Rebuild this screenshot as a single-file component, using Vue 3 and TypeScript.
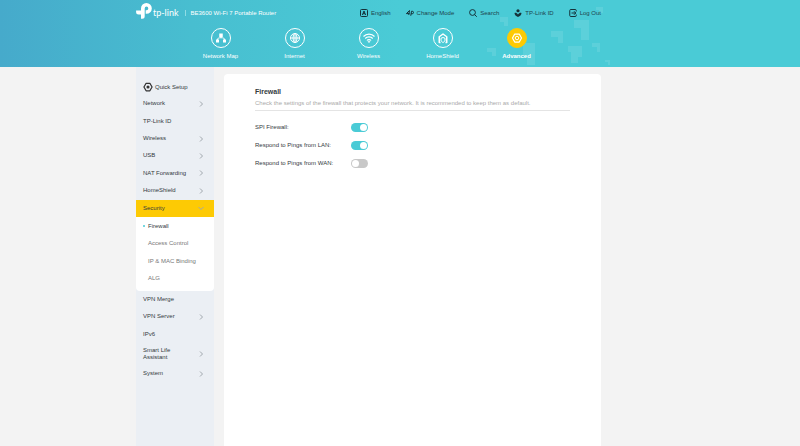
<script setup lang="ts">
import { reactive } from 'vue'

interface MenuItem {
  label: string
  arrow?: boolean
  active?: boolean
}

const tabs = ['Network Map', 'Internet', 'Wireless', 'HomeShield', 'Advanced']
const tools = ['English', 'Change Mode', 'Search', 'TP-Link ID', 'Log Out']

const upper: MenuItem[] = [
  { label: 'Network', arrow: true },
  { label: 'TP-Link ID' },
  { label: 'Wireless', arrow: true },
  { label: 'USB', arrow: true },
  { label: 'NAT Forwarding', arrow: true },
  { label: 'HomeShield', arrow: true },
  { label: 'Security', arrow: true, active: true },
]
const security = ['Firewall', 'Access Control', 'IP & MAC Binding', 'ALG']
const lower: MenuItem[] = [
  { label: 'VPN Merge' },
  { label: 'VPN Server', arrow: true },
  { label: 'IPv6' },
  { label: 'Smart Life Assistant', arrow: true },
  { label: 'System', arrow: true },
]

const settings = reactive([
  { id: 'spi', label: 'SPI Firewall:', on: true },
  { id: 'lan', label: 'Respond to Pings from LAN:', on: true },
  { id: 'wan', label: 'Respond to Pings from WAN:', on: false },
])
</script>

<template>
  <div class="page">
    <header class="header">
      <div class="wrap">
        <svg class="pattern" viewBox="0 0 110 67" aria-hidden="true">
          <path fill="#fff" fill-opacity=".1" d="M9 17h8v9h-4v-4H9zM-4 48h9v8H1v-4h-5zM32 43h12v22h-8v-8h-4zM60 31h12v12h-5v-6h-7zM83 20h15v20h-8V28h-7zM77 46h14v11h-4v6h-7V52h-3zM101 43h8v9h-3v-5h-5zM105 7h7v6h-4v-3h-3zM114 60h5v5h-2v-3h-3z" />
        </svg>
        <div class="top">
          <a class="brand" href="#" aria-label="tp-link">
            <svg class="mark" viewBox="0 0 16 16" aria-hidden="true" fill="#fff">
              <path d="M5 7.500V5.400a5.400 5.400 0 1 1 5.500 5.400H9.700V7.200h.8a1.800 1.800 0 1 0-1.800-1.800v7.900a2.500 2.500 0 0 1-2.500 2.500H5v-4.400H2.600A2.500 2.500 0 0 1 .1 8.900V7.500z" />
            </svg>
            <span class="word">tp-link</span>
          </a>
          <span class="model">BE3600 Wi-Fi 7 Portable Router</span>
          <nav class="tools">
            <a v-for="(t, i) in tools" :key="t" href="#" class="tool">
              <svg viewBox="0 0 16 16" aria-hidden="true" fill="none" stroke="currentColor" stroke-width="2">
                <template v-if="i === 0"><rect x="1" y="1" width="14" height="14" rx="2" /><path d="M4.800 12 8 4l3.200 8M6 9.400h4" /></template>
                <template v-else-if="i === 1"><path d="M5.500 12 7 3 .8 9.200H7M9.500 13.500 11 4.500h1.500a2.400 2.400 0 0 1 0 5H10" /></template>
                <template v-else-if="i === 2"><circle cx="7" cy="7" r="5.800" /><path d="m11 11 4.500 4.500" /></template>
                <template v-else-if="i === 3"><circle cx="8" cy="3.500" r="3.200" fill="currentColor" stroke="none" /><path d="M1 8c3-1 4.500 0 7 3 2.500-3 4-4 7-3 0 4-3 6-7 8-4-2-7-4-7-8z" fill="currentColor" stroke="none" /></template>
                <template v-else><path d="M14.500 5V3a2 2 0 0 0-2-2H3.500a2 2 0 0 0-2 2v10a2 2 0 0 0 2 2h9a2 2 0 0 0 2-2v-2M5 8h9M10 4.500 13.500 8 10 11.500" stroke-width="2" /></template>
              </svg>
              {{ t }}
            </a>
          </nav>
        </div>
        <nav class="tabs">
          <a v-for="(t, i) in tabs" :key="t" href="#" class="tab" :class="{ current: i === 4 }">
            <span class="ring">
              <svg viewBox="0 0 24 24" aria-hidden="true" fill="none" stroke="#fff" stroke-width="2">
                <template v-if="i === 0"><path d="M8.500 3h7v7h-7zM2 15h6v6H2zM16 15h6v6h-6z" fill="#fff" stroke="none" /><path d="M12 8v4M5 16c0-4 2-4.500 7-4.500s7 .5 7 4.500" /></template>
                <template v-else-if="i === 1"><circle cx="12" cy="12" r="9" /><ellipse cx="12" cy="12" rx="4" ry="9" /><path d="M12 3v18M3 12h18" /></template>
                <template v-else-if="i === 2"><path d="M1 9c6-6.500 16-6.500 22 0M4.500 13c4-4.500 11-4.500 15 0M8 17c2-2.500 6-2.500 8 0" stroke-width="2.400" /><path d="m12 22-3-3.500h6z" fill="#fff" stroke="none" /></template>
                <template v-else-if="i === 3"><path d="M7 21H4.500V9.500L12 4l7.500 5.500V21H17" stroke-width="3" stroke-linejoin="round" /><path d="m12 11 4 1.500V16c0 2.500-2 4-4 5-2-1-4-2.500-4-5v-3.500z" /></template>
                <template v-else><path d="M7.500 4h9l4.500 8-4.500 8h-9L3 12z" stroke-width="2.500" stroke-linejoin="round" /><circle cx="12" cy="12" r="3.500" /></template>
              </svg>
            </span>
            <span>{{ t }}</span>
          </a>
        </nav>
      </div>
    </header>

    <div class="wrap body">
      <aside class="side">
        <a href="#" class="quick">
          <svg viewBox="0 0 16 16" aria-hidden="true"><path d="M5 2h6l3.500 6-3.500 6H5L1.500 8z" fill="none" stroke="#333" stroke-width="2" stroke-linejoin="round" /><circle cx="8" cy="8" r="2.500" fill="#333" /></svg>
          Quick Setup
        </a>
        <nav class="group upper">
          <a v-for="m in upper" :key="m.label" href="#" class="item" :class="{ active: m.active }">
            <span class="name">{{ m.label }}</span>
            <svg v-if="m.arrow" class="chev" :class="{ down: m.active }" viewBox="0 0 6 6" aria-hidden="true"><path d="m2 .5 2.500 2.500L2 5.500" /></svg>
          </a>
        </nav>
        <nav class="sub">
          <a v-for="(c, i) in security" :key="c" href="#" class="subitem" :class="{ on: i === 0 }">{{ c }}</a>
        </nav>
        <nav class="group lower">
          <a v-for="m in lower" :key="m.label" href="#" class="item">
            <span class="name">{{ m.label }}</span>
            <svg v-if="m.arrow" class="chev" viewBox="0 0 6 6" aria-hidden="true"><path d="m2 .5 2.500 2.500L2 5.500" /></svg>
          </a>
        </nav>
      </aside>

      <main class="card">
        <h1>Firewall</h1>
        <p class="desc">Check the settings of the firewall that protects your network. It is recommended to keep them as default.</p>
        <div v-for="s in settings" :key="s.id" class="row">
          <label :for="s.id">{{ s.label }}</label>
          <input :id="s.id" v-model="s.on" type="checkbox" role="switch" class="switch" />
        </div>
      </main>
    </div>
  </div>
</template>

<style>
body {
  margin: 0;
  background: #f3f3f3;
}
</style>

<style scoped>
.page {
  display: flex;
  flex-direction: column;
  min-height: 100vh;
  font: 6px/8px "Liberation Sans", Arial, sans-serif;
  color: #333a3e;
}
a {
  color: inherit;
  text-decoration: none;
}
.header {
  background: linear-gradient(90deg, #46aacb 0%, #48bed0 24%, #4acbd6 50%, #4acbd6 100%);
}
.wrap {
  position: relative;
  box-sizing: border-box;
  width: 58%;
  min-width: 465px;
  margin-left: 17%;
}
.header .wrap {
  padding-bottom: 7px;
}
.pattern {
  position: absolute;
  right: 0;
  top: 0;
  height: 67px;
  width: 110px;
  overflow: visible;
}
.top {
  position: relative;
  display: flex;
  align-items: center;
  height: 26px;
}
.brand {
  display: flex;
  align-items: center;
  gap: 1px;
  color: #fff;
}
.mark {
  width: 16px;
  height: 16px;
  margin-bottom: 4px;
}
.word {
  font: 9px/12px Lato, sans-serif;
}
.model {
  margin-left: 6px;
  padding-left: 5px;
  border-left: 1px solid #8fdce4;
  line-height: 6px;
  color: #fff;
}
.tools {
  display: flex;
  gap: 15px;
  margin-left: auto;
}
.tool {
  display: flex;
  align-items: center;
  gap: 3px;
  color: #1d444d;
  white-space: nowrap;
}
.tool svg {
  width: 8px;
  height: 8px;
  color: #15323a;
}
.tabs {
  position: relative;
  display: flex;
  justify-content: center;
}
.tab {
  display: flex;
  flex-direction: column;
  align-items: center;
  gap: 4px;
  width: 74px;
  padding-top: 2px;
  color: #fff;
}
.ring {
  display: flex;
  align-items: center;
  justify-content: center;
  box-sizing: border-box;
  width: 20px;
  height: 20px;
  border: 1px solid #fff;
  border-radius: 50%;
}
.ring svg {
  width: 12px;
  height: 12px;
}
.current {
  font-weight: bold;
}
.current .ring {
  background: #fdca04;
  border-color: #fdca04;
}
.body {
  flex: 1;
  display: flex;
  gap: 10px;
}
.side {
  width: 78px;
  padding-top: 11px;
  background: #ebeff4;
}
.quick {
  display: flex;
  align-items: center;
  gap: 2px;
  height: 17px;
  padding-left: 7px;
}
.quick svg {
  width: 10px;
  height: 10px;
}
.group,
.sub {
  display: grid;
}
.upper {
  grid-auto-rows: 1fr;
  height: 122px;
}
.lower {
  grid-template-rows: repeat(3, 1fr) 22px 17px;
  height: 91px;
}
.item {
  display: flex;
  align-items: center;
  justify-content: space-between;
  padding: 0 10px 0 7px;
  line-height: 7px;
}
.lower .name {
  max-width: 36px;
}
.active {
  background: #fdca04;
}
.chev {
  width: 6px;
  height: 6px;
  fill: none;
  stroke: #a0a7ad;
  stroke-width: 1;
}
.down {
  transform: rotate(90deg);
}
.sub {
  grid-auto-rows: 1fr;
  height: 70px;
  padding-bottom: 4px;
  background: #fff;
  border-radius: 0 0 4px 4px;
}
.subitem {
  display: flex;
  align-items: center;
  padding-left: 12px;
  color: #777;
}
.on {
  padding-left: 7px;
  color: #333a3e;
}
.on::before {
  content: "";
  width: 2px;
  height: 2px;
  margin-right: 3px;
  border-radius: 50%;
  background: #4acbd6;
}
.card {
  flex: 1;
  margin-top: 7px;
  padding: 13px 31px;
  background: #fff;
  border-radius: 4px 4px 0 0;
}
h1 {
  margin: 0 0 3px;
  font: bold 7px/9px "Liberation Sans", Arial, sans-serif;
}
.desc {
  margin: 0 0 7px;
  padding-bottom: 3px;
  border-bottom: 1px solid #e4e4e4;
  color: #aaa;
}
.row {
  display: flex;
  align-items: center;
  height: 18px;
}
.row label {
  width: 96px;
}
.switch {
  appearance: none;
  box-sizing: border-box;
  width: 17px;
  height: 9px;
  margin: 0;
  padding: 1px;
  border-radius: 5px;
  background: #c8c8c8;
}
.switch::before {
  content: "";
  display: block;
  width: 7px;
  height: 7px;
  border-radius: 50%;
  background: #fff;
}
.switch:checked {
  background: #4acbd6;
}
.switch:checked::before {
  margin-left: auto;
}
</style>
